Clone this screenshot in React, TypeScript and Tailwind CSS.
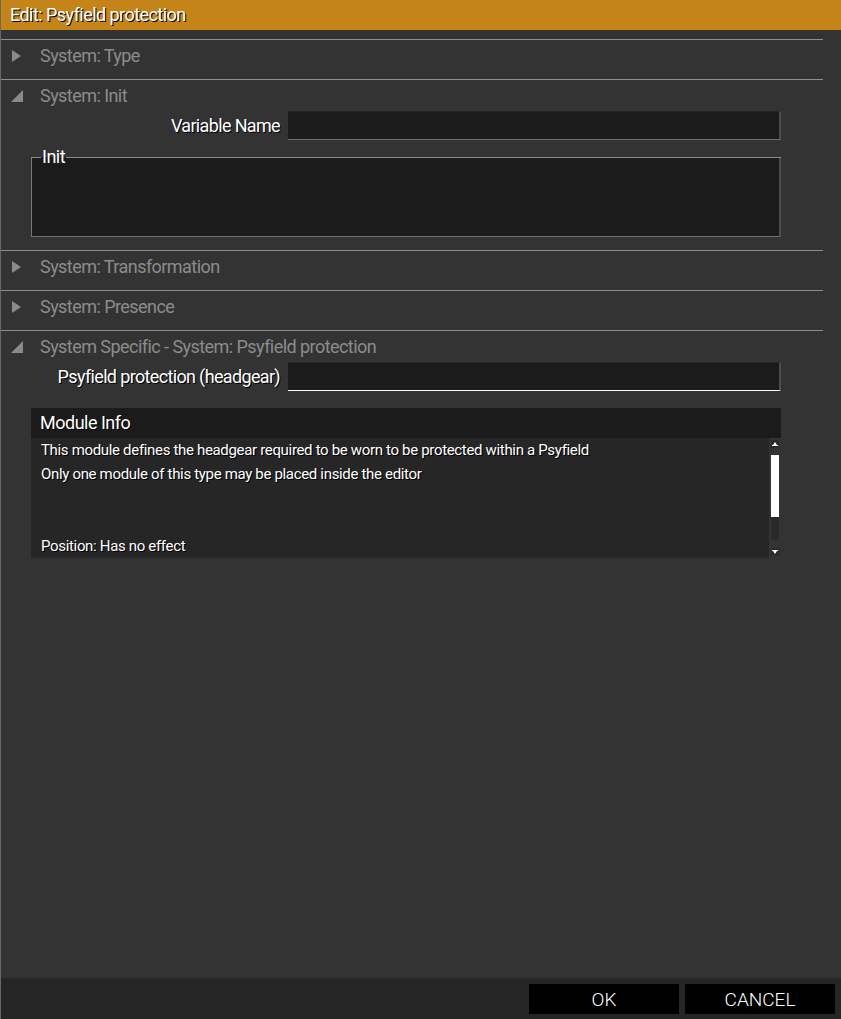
import React from "react";

function Divider() {
  return <div className="h-px w-[822px] bg-[#8f8f8f]" />;
}

function CollapsedIcon() {
  return (
    <svg width="10" height="14" viewBox="0 0 10 14">
      <polygon points="1,1 10,7 1,13" fill="#8a8a8a" />
    </svg>
  );
}

function ExpandedIcon() {
  return (
    <svg width="12" height="12" viewBox="0 0 12 12">
      <polygon points="12,0 12,12 0,12" fill="#8a8a8a" />
    </svg>
  );
}

function SectionTitle({ open, title }: { open?: boolean; title: string }) {
  return (
    <div className="flex h-[31px] items-center">
      <div className="flex w-[39px] items-center pl-[10px]">
        {open ? <ExpandedIcon /> : <CollapsedIcon />}
      </div>
      <span className="text-[18px] leading-none tracking-[-0.55px] text-[#8c8c8c]">{title}</span>
    </div>
  );
}

function Collapsed({ title }: { title: string }) {
  return (
    <div className="flex flex-col">
      <Divider />
      <SectionTitle title={title} />
      <div className="h-[8px]" />
    </div>
  );
}

function InputRow({ label, focused }: { label: string; focused?: boolean }) {
  return (
    <div className="flex h-[29px] items-center">
      <div className="w-[279px] text-right text-[18px] leading-none tracking-[-0.65px] text-white [text-shadow:1px_1px_0_#000]">
        {label}
      </div>
      <div
        className={
          focused
            ? "ml-[8px] h-[29px] w-[493px] border-r-2 border-b border-t border-t-[#262626] border-r-[#4d4d4d] border-b-white bg-[#1b1b1b]"
            : "ml-[8px] h-[29px] w-[493px] border-r-2 border-b border-t border-t-[#262626] border-r-[#4d4d4d] border-b-[#6e6e6e] bg-[#1b1b1b]"
        }
      />
    </div>
  );
}

function ArrowUp() {
  return (
    <svg width="8" height="8" viewBox="0 0 8 8">
      <polygon points="4,2 6,5 2,5" fill="#fff" />
      <rect x="1" y="5" width="6" height="1" fill="#fff" />
    </svg>
  );
}

function ArrowDown() {
  return (
    <svg width="8" height="8" viewBox="0 0 8 8">
      <rect x="1" y="2" width="6" height="1" fill="#fff" />
      <polygon points="2,3 6,3 4,6" fill="#fff" />
    </svg>
  );
}

export default function App() {
  return (
    <div className="flex h-[1019px] w-[841px] flex-col overflow-hidden border-l border-[#6d665c] bg-[#333333] font-['Roboto',sans-serif]">
      <div className="flex h-[30px] shrink-0 items-center bg-[#c58418] pl-[9px]">
        <span className="text-[18px] leading-none tracking-[-0.55px] text-white [text-shadow:1px_1px_0_#000]">
          Edit: Psyfield protection
        </span>
      </div>

      <div className="flex flex-1 flex-col pt-[9px]">
        <Collapsed title="System: Type" />

        <div className="flex flex-col">
          <Divider />
          <SectionTitle open title="System: Init" />
          <InputRow label="Variable Name" />
          <div className="relative ml-[30px] mt-[17px] h-[80px] w-[750px] border-b border-l border-r-2 border-b-[#6e6e6e] border-l-[#777777] border-r-[#4d4d4d] bg-[#1b1b1b]">
            <div className="absolute left-[-1px] right-[-2px] top-0 flex items-start">
              <div className="h-px w-[10px] bg-[#8a8a8a]" />
              <span className="-mt-[9px] px-px text-[18px] leading-[18px] tracking-[-0.5px] text-white">Init</span>
              <div className="h-px flex-1 bg-[#8a8a8a]" />
            </div>
          </div>
          <div className="h-[13px]" />
        </div>

        <Collapsed title="System: Transformation" />
        <Collapsed title="System: Presence" />

        <div className="flex flex-col">
          <Divider />
          <SectionTitle open title="System Specific - System: Psyfield protection" />
          <InputRow label="Psyfield protection (headgear)" focused />
          <div className="ml-[30px] mt-[17px] flex w-[750px] flex-col">
            <div className="flex h-[30px] items-center bg-[#1b1b1b] pl-[9px]">
              <span className="text-[18px] leading-none tracking-[-0.5px] text-white [text-shadow:1px_1px_0_#000]">
                Module Info
              </span>
            </div>
            <div className="flex h-[120px]">
              <div className="flex w-[738px] flex-col bg-[#262626] pl-[10px] text-[15px] leading-[24px] tracking-[-0.33px] text-white [text-shadow:1px_1px_0_#000]">
                <div>This module defines the headgear required to be worn to be protected within a Psyfield</div>
                <div>Only one module of this type may be placed inside the editor</div>
                <div className="h-[24px]" />
                <div className="h-[24px]" />
                <div>Position: Has no effect</div>
              </div>
              <div className="flex w-[12px] flex-col pl-[2px] pt-[2px]">
                <div className="flex h-[8px] w-[8px] items-center justify-center bg-[#2a2a2a]">
                  <ArrowUp />
                </div>
                <div className="mt-[7px] flex h-[85px] w-[8px] flex-col bg-[#2a2a2a]">
                  <div className="h-[62px] w-[8px] bg-white" />
                </div>
                <div className="mt-[8px] flex h-[8px] w-[8px] items-center justify-center bg-[#2a2a2a]">
                  <ArrowDown />
                </div>
              </div>
            </div>
          </div>
        </div>
      </div>

      <div className="flex h-[41px] shrink-0 items-start justify-end gap-[6px] bg-[#262626] pr-[6px] pt-[6px]">
        <button className="flex h-[30px] w-[150px] items-center justify-center bg-black text-[19px] font-light leading-none text-white">
          OK
        </button>
        <button className="flex h-[30px] w-[150px] items-center justify-center bg-black text-[19px] font-light leading-none text-white">
          CANCEL
        </button>
      </div>
    </div>
  );
}
